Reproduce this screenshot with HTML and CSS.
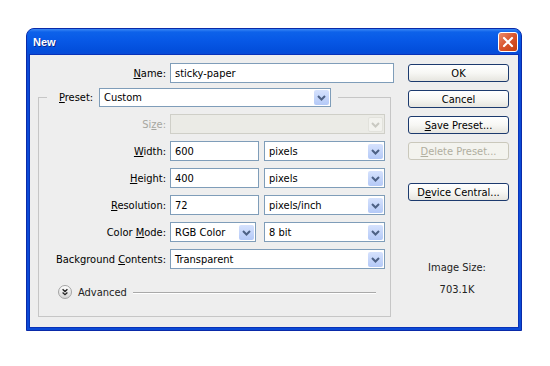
FILE: index.html
```html
<!DOCTYPE html>
<html lang="en">
<head>
    <meta charset="UTF-8">
    <meta name="viewport" content="width=device-width, initial-scale=1.0">
    <title>New</title>
    <link rel="stylesheet" href="styles.css">
</head>
<body>
    <div class="window">
        <div class="titlebar">
            <span class="title">New</span>
            <span class="close">
                <svg width="20" height="20" viewBox="0 0 20 20"><path d="M6 6 L14 14 M14 6 L6 14" stroke="#fff" stroke-width="2.2" stroke-linecap="round"/></svg>
            </span>
        </div>
        <div class="client">
            <div class="main">
                <div class="name-row">
                    <label class="lbl"><u>N</u>ame:</label>
                    <input class="field" type="text" value="sticky-paper">
                </div>
                <fieldset class="group">
                    <legend class="preset">
                        <label class="preset-lbl"><u>P</u>reset:</label>
                        <div class="select preset-select"><span class="select-text">Custom</span><span class="arrow"><svg width="15" height="15" viewBox="0 0 15 15"><path d="M4 6 L7.5 9.5 L11 6" stroke="#4d6185" stroke-width="2" fill="none"/></svg></span></div>
                    </legend>
                    <div class="rows">
                        <label class="lbl disabled">Si<u>z</u>e:</label>
                        <div class="select disabled-select"><span class="select-text"></span><span class="arrow"><svg width="15" height="15" viewBox="0 0 15 15"><path d="M4 6 L7.5 9.5 L11 6" stroke="#c9c9c2" stroke-width="2" fill="none"/></svg></span></div>

                        <label class="lbl"><u>W</u>idth:</label>
                        <div class="pair">
                            <input class="field unit-input" type="text" value="600">
                            <div class="select grow"><span class="select-text">pixels</span><span class="arrow"><svg width="15" height="15" viewBox="0 0 15 15"><path d="M4 6 L7.5 9.5 L11 6" stroke="#4d6185" stroke-width="2" fill="none"/></svg></span></div>
                        </div>

                        <label class="lbl"><u>H</u>eight:</label>
                        <div class="pair">
                            <input class="field unit-input" type="text" value="400">
                            <div class="select grow"><span class="select-text">pixels</span><span class="arrow"><svg width="15" height="15" viewBox="0 0 15 15"><path d="M4 6 L7.5 9.5 L11 6" stroke="#4d6185" stroke-width="2" fill="none"/></svg></span></div>
                        </div>

                        <label class="lbl"><u>R</u>esolution:</label>
                        <div class="pair">
                            <input class="field unit-input" type="text" value="72">
                            <div class="select grow"><span class="select-text">pixels/inch</span><span class="arrow"><svg width="15" height="15" viewBox="0 0 15 15"><path d="M4 6 L7.5 9.5 L11 6" stroke="#4d6185" stroke-width="2" fill="none"/></svg></span></div>
                        </div>

                        <label class="lbl">Color <u>M</u>ode:</label>
                        <div class="pair">
                            <div class="select mode-select"><span class="select-text">RGB Color</span><span class="arrow"><svg width="15" height="15" viewBox="0 0 15 15"><path d="M4 6 L7.5 9.5 L11 6" stroke="#4d6185" stroke-width="2" fill="none"/></svg></span></div>
                            <div class="select grow"><span class="select-text">8 bit</span><span class="arrow"><svg width="15" height="15" viewBox="0 0 15 15"><path d="M4 6 L7.5 9.5 L11 6" stroke="#4d6185" stroke-width="2" fill="none"/></svg></span></div>
                        </div>

                        <label class="lbl">Background <u>C</u>ontents:</label>
                        <div class="select"><span class="select-text">Transparent</span><span class="arrow"><svg width="15" height="15" viewBox="0 0 15 15"><path d="M4 6 L7.5 9.5 L11 6" stroke="#4d6185" stroke-width="2" fill="none"/></svg></span></div>
                    </div>
                    <div class="advanced">
                        <svg class="adv-icon" width="14" height="14" viewBox="0 0 14 14">
                            <defs>
                                <linearGradient id="advg" x1="0" y1="0" x2="0" y2="1">
                                    <stop offset="0" stop-color="#ffffff"/>
                                    <stop offset="1" stop-color="#d4d4d4"/>
                                </linearGradient>
                            </defs>
                            <circle cx="7" cy="7" r="6.5" fill="url(#advg)" stroke="#a3a3a3"/>
                            <path d="M4.6 4.3 L7 6.5 L9.4 4.3 M4.6 7.5 L7 9.7 L9.4 7.5" stroke="#222" stroke-width="1.3" fill="none"/>
                        </svg>
                        <span class="adv-text">Advanced</span>
                        <span class="adv-line"></span>
                    </div>
                </fieldset>
            </div>
            <div class="side">
                <button class="btn">OK</button>
                <button class="btn">Cancel</button>
                <button class="btn"><u>S</u>ave Preset...</button>
                <button class="btn" disabled><u>D</u>elete Preset...</button>
                <button class="btn device">D<u>e</u>vice Central...</button>
                <div class="size-info">
                    <div>Image Size:</div>
                    <div class="size-value">703.1K</div>
                </div>
            </div>
        </div>
    </div>
</body>
</html>
```

FILE: styles.css
```css
body {
    margin: 0;
    background: #fff;
    font-family: "DejaVu Sans Condensed", "Liberation Sans", sans-serif;
    font-size: 11px;
    color: #000;
}

.window {
    width: 496px;
    height: 303px;
    margin: 28px 0 0 26px;
    box-sizing: border-box;
    display: flex;
    flex-direction: column;
    background: #0b4ad6;
    border: 1px solid #0a2aa8;
    border-radius: 8px 8px 0 0;
}

.titlebar {
    height: 26px;
    display: flex;
    align-items: center;
    justify-content: space-between;
    padding: 0 3px 0 6px;
    border-radius: 7px 7px 0 0;
    background: linear-gradient(#3b88f5 0, #0d62ea 3px, #0758e6 45%, #034fdc 80%, #0a4bd6 100%);
}

.title {
    color: #fff;
    font-family: "Liberation Sans", sans-serif;
    font-weight: bold;
    font-size: 11px;
    text-shadow: 1px 1px 0 #0a2a8c;
}

.close {
    width: 20px;
    height: 20px;
    box-sizing: border-box;
    border: 1px solid #fff;
    border-radius: 3px;
    background: linear-gradient(135deg, #eb8b6c 0%, #d8542c 50%, #c4400f 100%);
    display: flex;
}

.close svg {
    margin: -1px;
}

.client {
    flex: 1;
    margin: 0 3px 3px;
    display: flex;
    background: #eeeeee;
    box-shadow: 0 0 0 1px #0832b8;
}

.main {
    width: 378px;
    padding: 8px 0 0 8px;
    box-sizing: border-box;
}

.lbl {
    text-align: right;
    white-space: nowrap;
}

.lbl.disabled {
    color: #a6a6a0;
}

.name-row {
    display: grid;
    grid-template-columns: 128px 224px;
    column-gap: 4px;
    align-items: center;
    height: 20px;
}

.field {
    height: 20px;
    box-sizing: border-box;
    border: 1px solid #7f9db9;
    background: #fff;
    padding: 0 4px;
    margin: 0;
    font-family: inherit;
    font-size: 11px;
    color: #000;
    outline: none;
}

.group {
    width: 353px;
    box-sizing: border-box;
    margin: 5px 0 0;
    padding: 0 0 16px;
    border: 1px solid #c6c6c6;
    min-width: 0;
}

.preset {
    display: flex;
    align-items: center;
    margin-left: 8px;
    padding: 0 7px 0 12px;
}

.preset-lbl {
    width: 40px;
}

.preset-select {
    width: 232px;
}

.select {
    height: 19px;
    box-sizing: border-box;
    border: 1px solid #7f9db9;
    background: #fff;
    display: flex;
    align-items: center;
    padding: 1px;
}

.select-text {
    flex: 1;
    padding-left: 3px;
    white-space: nowrap;
    overflow: hidden;
}

.arrow {
    width: 15px;
    height: 15px;
    box-sizing: border-box;
    border-radius: 2px;
    background: linear-gradient(#d6e2fd, #b4c9f7);
    display: flex;
}

.disabled-select {
    border-color: #cfcfc8;
    background: #ebebe6;
}

.disabled-select .arrow {
    background: #f2f2ee;
    border: 1px solid #e2e2dc;
}

.disabled-select .arrow svg {
    margin: -1px;
}

.rows {
    display: grid;
    grid-template-columns: 127px 215px;
    column-gap: 4px;
    grid-auto-rows: 20px;
    row-gap: 7px;
    align-items: center;
    margin-top: 7px;
}

.rows .select {
    height: 20px;
}

.pair {
    display: flex;
    gap: 5px;
}

.unit-input {
    width: 89px;
}

.grow {
    flex: 1;
}

.mode-select {
    width: 86px;
    margin-right: 3px;
}

.advanced {
    display: flex;
    align-items: center;
    gap: 6px;
    height: 16px;
    margin: 15px 14px 0 19px;
}

.adv-text {
    color: #222;
}

.adv-line {
    flex: 1;
    height: 1px;
    background: #a9a9a9;
    box-shadow: 0 1px 0 #fff;
}

.side {
    width: 101px;
    padding-top: 9px;
    display: flex;
    flex-direction: column;
    gap: 8px;
}

.btn {
    height: 18px;
    padding: 0;
    box-sizing: border-box;
    border: 1px solid #1c3a6e;
    border-radius: 3px;
    background: linear-gradient(#ffffff 0%, #f7f7f4 50%, #e6e5df 100%);
    font-family: inherit;
    font-size: 11px;
    color: #000;
}

.btn:disabled {
    border-color: #cac8bb;
    background: #f3f3ee;
    color: #b0ae9f;
}

.device {
    margin-top: 15px;
}

.size-info {
    margin-top: 52px;
    padding-right: 3px;
    text-align: center;
    line-height: 14px;
    color: #222;
}

.size-value {
    margin-top: 8px;
}
```
